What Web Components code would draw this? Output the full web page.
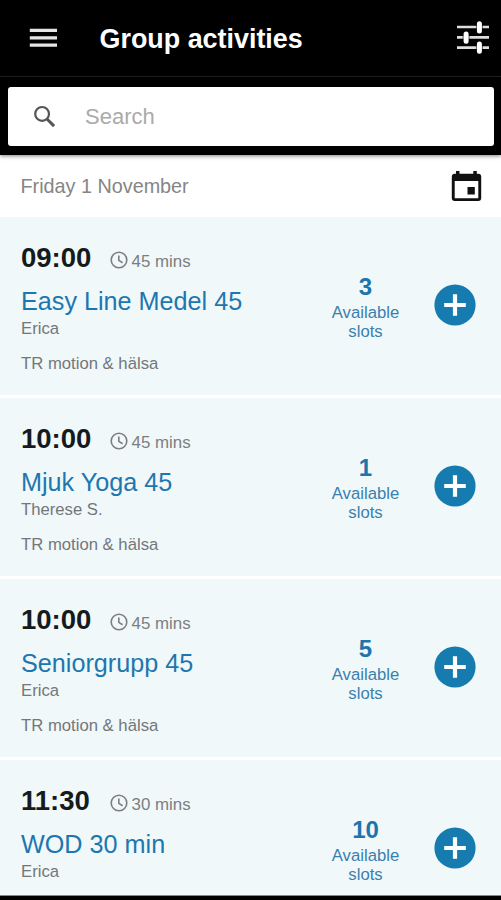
<!DOCTYPE html>
<html lang="en"><head><meta charset="utf-8"><title>Group activities</title>
<style>
html,body{margin:0;height:900px;overflow:hidden;background:#fff}
body{font-family:"Liberation Sans",Arial,sans-serif;color:#737779}
</style></head><body>
<activities-screen></activities-screen>
<script>
const define = (name, html, setup) => customElements.define(name, class extends HTMLElement {
  constructor() {
    super();
    const t = document.createElement('template');
    t.innerHTML = html;
    this.attachShadow({mode: 'open'}).append(t.content.cloneNode(true));
  }
  connectedCallback() { if (setup) setup(this); }
});

define('app-header', `<style>
:host{display:flex;box-sizing:border-box;height:77px;background:#000;border-bottom:1px solid #222;color:#fff;align-items:center;padding:0 11px 0 29px}
h1{margin:2px 0 0 41.5px;flex:1;font-size:26.9px;line-height:32px;font-weight:700;white-space:nowrap}
svg{display:block}
</style>
<svg width="29" height="21" viewBox="0 0 29 21"><path d="M.8 .8h27.2v3.2H.8zM.8 8.2h27.2v3.2H.8zM.8 15.6h27.2v3.2H.8z" fill="#e4e4e4"/></svg>
<h1><slot></slot></h1>
<svg width="34" height="34" viewBox="0 0 34 34"><path d="M1 6h32M1 16.4h32M1 26.6h32" stroke="#ddd" stroke-width="2.6"/><path d="M23.4 1v10.4M10.1 11.3v10.8M23.4 21.4v10.8" stroke="#000" stroke-width="7" opacity=".6"/><path d="M23.4 2.7v7.2M10.1 13v7.2M23.4 23.1v7.2" stroke="#fff" stroke-width="5" stroke-linecap="round"/></svg>`);

define('search-field', `<style>
:host{display:block;background:#000;padding:9.5px 7px 9px 8px;box-shadow:0 1px 4px rgba(0,0,0,.5);position:relative}
div{box-sizing:border-box;height:59.5px;background:#fff;border-radius:3px;display:flex;align-items:center;padding-left:25px;gap:29px;font-size:22px;color:#aaa;line-height:28px}
svg{display:block}
span{margin-top:2px}
</style>
<div><svg width="23" height="23" viewBox="0 0 23 23" fill="none" stroke="#555"><circle cx="9.1" cy="8.9" r="6.9" stroke-width="2.2"/><path d="M14 14l7.1 7.1" stroke-width="3"/></svg><span><slot></slot></span></div>`);

define('date-bar', `<style>
:host{display:flex;height:62px;align-items:center;justify-content:space-between;padding:0 19px 0 20.5px;font-size:19.8px;color:#858585}
svg{display:block}
</style>
<span><slot></slot></span>
<svg width="31" height="32" viewBox="0 0 31 32"><path fill="#111" fill-rule="evenodd" d="M5 1h3.5v2.8h13.8V1h3.5v2.8h1.4q3 0 3 3v21.3q0 3-3 3H3.8q-3 0-3-3V6.8q0-3 3-3H5zM3.7 11v17.2h23.6V11z"/><path fill="#111" d="M16.5 17h7.3v7.5h-7.3z"/></svg>`);

define('duration-label', `<style>
:host{display:flex;align-items:center;gap:4px;font-size:16.9px;line-height:20px;color:#7b7f81;white-space:nowrap}
svg{display:block;margin-top:-3px}
</style>
<svg width="18" height="18" viewBox="0 0 18 18" fill="none" stroke="#7b7f81" stroke-width="1.6"><circle cx="9" cy="9" r="7.8"/><path d="M8.8 4.4V9.4l3.8 2.3"/></svg><span><slot></slot></span>`);

define('slot-count', `<style>
:host{display:block;width:80px;text-align:center;color:#3a80ae;font-size:16.7px;line-height:19.3px}
b{display:block;font-size:24px;line-height:28px;margin-bottom:2.4px;color:#1e75aa}
</style><b><slot></slot></b><div>Available</div><div>slots</div>`);

define('add-button', `<style>
:host{display:block;width:42px;height:42px}svg{display:block}
</style><svg width="42" height="42" viewBox="0 0 42 42"><circle cx="21" cy="21" r="20.6" fill="#167caf"/><path d="M10.2 21h21.6M21 10.2v21.6" stroke="#fff" stroke-width="4.2"/></svg>`);

define('activity-row', `<style>
:host{display:grid;grid-template-columns:304.5px 80px 1fr;box-sizing:border-box;height:181px;padding:24.5px 24px 0 21px;background:#f0f8fa;border-bottom:3px solid #fff}
.head{display:flex;height:32px}
time{font-size:27.5px;line-height:32px;font-weight:700;color:#151a1c;width:88.5px}
duration-label{margin-top:10px;height:20px}
h2{margin:12px 0 0;font-size:25.2px;line-height:30px;font-weight:400;color:#1d77ae;white-space:nowrap}
p{margin:0;font-size:16.7px;line-height:20px;white-space:nowrap}
.who{margin-top:3.5px}.where{margin-top:14.5px}
slot-count{margin-top:31px}
add-button{margin:42.5px 0 0 28.5px}
</style>
<div><div class="head"><time></time><duration-label></duration-label></div><h2><slot></slot></h2><p class="who"></p><p class="where"></p></div>
<slot-count></slot-count><add-button></add-button>`, el => {
  const set = (sel, attr) => el.shadowRoot.querySelector(sel).textContent = el.getAttribute(attr);
  set('time', 'time'); set('duration-label', 'duration'); set('.who', 'trainer'); set('.where', 'place'); set('slot-count', 'slots');
});

define('activities-screen', `<style>
:host{display:flex;flex-direction:column;width:501px;height:900px;overflow:hidden}
main{height:678px;overflow:hidden}
footer{box-sizing:border-box;height:5px;background:#000;border-top:1px solid #888}
</style>
<app-header>Group activities</app-header>
<search-field>Search</search-field>
<date-bar>Friday 1 November</date-bar>
<main>
<activity-row time="09:00" duration="45 mins" trainer="Erica" place="TR motion &amp; hälsa" slots="3">Easy Line Medel 45</activity-row>
<activity-row time="10:00" duration="45 mins" trainer="Therese S." place="TR motion &amp; hälsa" slots="1">Mjuk Yoga 45</activity-row>
<activity-row time="10:00" duration="45 mins" trainer="Erica" place="TR motion &amp; hälsa" slots="5">Seniorgrupp 45</activity-row>
<activity-row time="11:30" duration="30 mins" trainer="Erica" slots="10">WOD 30 min</activity-row>
</main><footer></footer>`);
</script></body></html>
